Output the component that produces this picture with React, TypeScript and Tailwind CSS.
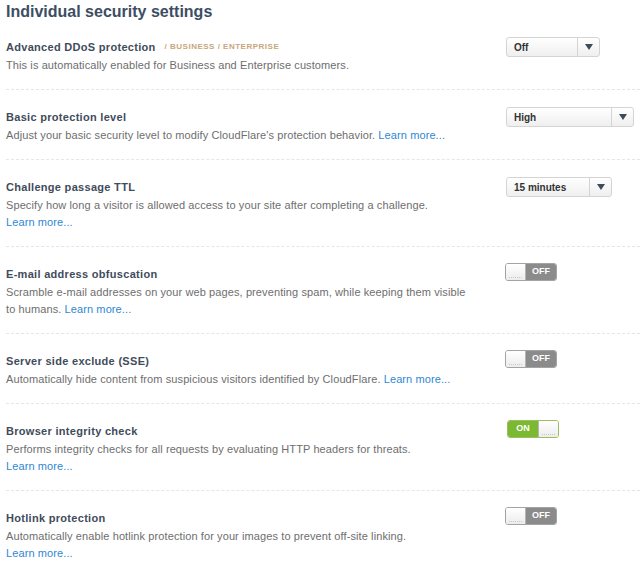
import type { ReactNode } from 'react';

const Learn = () => <span className="whitespace-nowrap text-[#2e88d4]">Learn more...</span>;

function Select({ value, width }: { value: string; width: string }) {
  return (
    <div
      className={`flex h-[20px] ${width} items-center rounded-[3px] border border-[#d4d4d4] bg-linear-to-b from-white to-[#efefef]`}
    >
      <span className="flex-1 pl-[7px] text-[10px] font-bold text-[#333]">{value}</span>
      <span className="flex h-full w-[22px] items-center justify-center border-l border-[#d4d4d4]">
        <svg width="8" height="6" viewBox="0 0 8 6">
          <path d="M0 0 L8 0 L4 6 Z" fill="#3e4b5b" />
        </svg>
      </span>
    </div>
  );
}

function Toggle({ on }: { on: boolean }) {
  const knob = (
    <div className="flex w-[19px] flex-col justify-end bg-linear-to-b from-white to-[#ececec] pb-[2px]">
      <div className="mx-[3px] border-b border-dotted border-[#c8c8c8]" />
    </div>
  );
  if (on) {
    return (
      <div className="ml-[1px] flex h-[18px] w-[52px] overflow-hidden rounded-[3px] border border-[#9cbf5e]">
        <div className="flex flex-1 items-center justify-center bg-[#7ab931] text-[9px] font-bold text-white">
          ON
        </div>
        <div className="border-l border-[#b5b5b5]" />
        {knob}
      </div>
    );
  }
  return (
    <div className="ml-[-1px] flex h-[18px] w-[52px] overflow-hidden rounded-[3px] border border-[#a3a3a3]">
      {knob}
      <div className="border-l border-[#b5b5b5]" />
      <div className="flex flex-1 items-center justify-center bg-[#8b8b8b] text-[9px] font-bold text-white">
        OFF
      </div>
    </div>
  );
}

function Row({
  title,
  badge,
  desc,
  control,
  toggle,
  first,
}: {
  title: string;
  badge?: string;
  desc: ReactNode;
  control: ReactNode;
  toggle?: boolean;
  first?: boolean;
}) {
  return (
    <div
      className={`flex pb-[15px] ${first ? 'pt-[17px]' : 'border-t border-dashed border-[#e6e6e6] pt-[19px]'}`}
    >
      <div className="w-[500px]">
        <div className="flex h-[16px] items-center">
          <span className="text-[11px] font-bold tracking-[0.3px] text-[#3f4c5c]">{title}</span>
          {badge && (
            <span className="ml-[9px] text-[8px] font-bold tracking-[0.5px] text-[#c9a67c]">{badge}</span>
          )}
        </div>
        <p className="mt-[2px] text-[11px] leading-[17px] tracking-[0.1px] text-[#6e6e6e]">{desc}</p>
      </div>
      <div className={toggle ? 'mt-[-3px]' : 'mt-[-2px]'}>{control}</div>
    </div>
  );
}

export default function App() {
  return (
    <div
      className="min-h-[561px] bg-white pl-[6px]"
      style={{ fontFamily: '"Liberation Sans", Arial, sans-serif' }}
    >
      <h1 className="pt-[2px] text-[16px] font-bold leading-[20px] text-[#3d4e63]">
        Individual security settings
      </h1>

      <Row
        first
        title="Advanced DDoS protection"
        badge="/ BUSINESS / ENTERPRISE"
        desc="This is automatically enabled for Business and Enterprise customers."
        control={<Select value="Off" width="w-[94px]" />}
      />
      <Row
        title="Basic protection level"
        desc={
          <>
            Adjust your basic security level to modify CloudFlare's protection behavior. <Learn />
          </>
        }
        control={<Select value="High" width="w-[128px]" />}
      />
      <Row
        title="Challenge passage TTL"
        desc={
          <>
            Specify how long a visitor is allowed access to your site after completing a challenge.
            <br />
            <Learn />
          </>
        }
        control={<Select value="15 minutes" width="w-[106px]" />}
      />
      <Row
        title="E-mail address obfuscation"
        toggle
        desc={
          <>
            Scramble e-mail addresses on your web pages, preventing spam, while keeping them visible
            <br />
            to humans. <Learn />
          </>
        }
        control={<Toggle on={false} />}
      />
      <Row
        title="Server side exclude (SSE)"
        toggle
        desc={
          <>
            Automatically hide content from suspicious visitors identified by CloudFlare. <Learn />
          </>
        }
        control={<Toggle on={false} />}
      />
      <Row
        title="Browser integrity check"
        toggle
        desc={
          <>
            Performs integrity checks for all requests by evaluating HTTP headers for threats.
            <br />
            <Learn />
          </>
        }
        control={<Toggle on />}
      />
      <Row
        title="Hotlink protection"
        toggle
        desc={
          <>
            Automatically enable hotlink protection for your images to prevent off-site linking.
            <br />
            <Learn />
          </>
        }
        control={<Toggle on={false} />}
      />
    </div>
  );
}
